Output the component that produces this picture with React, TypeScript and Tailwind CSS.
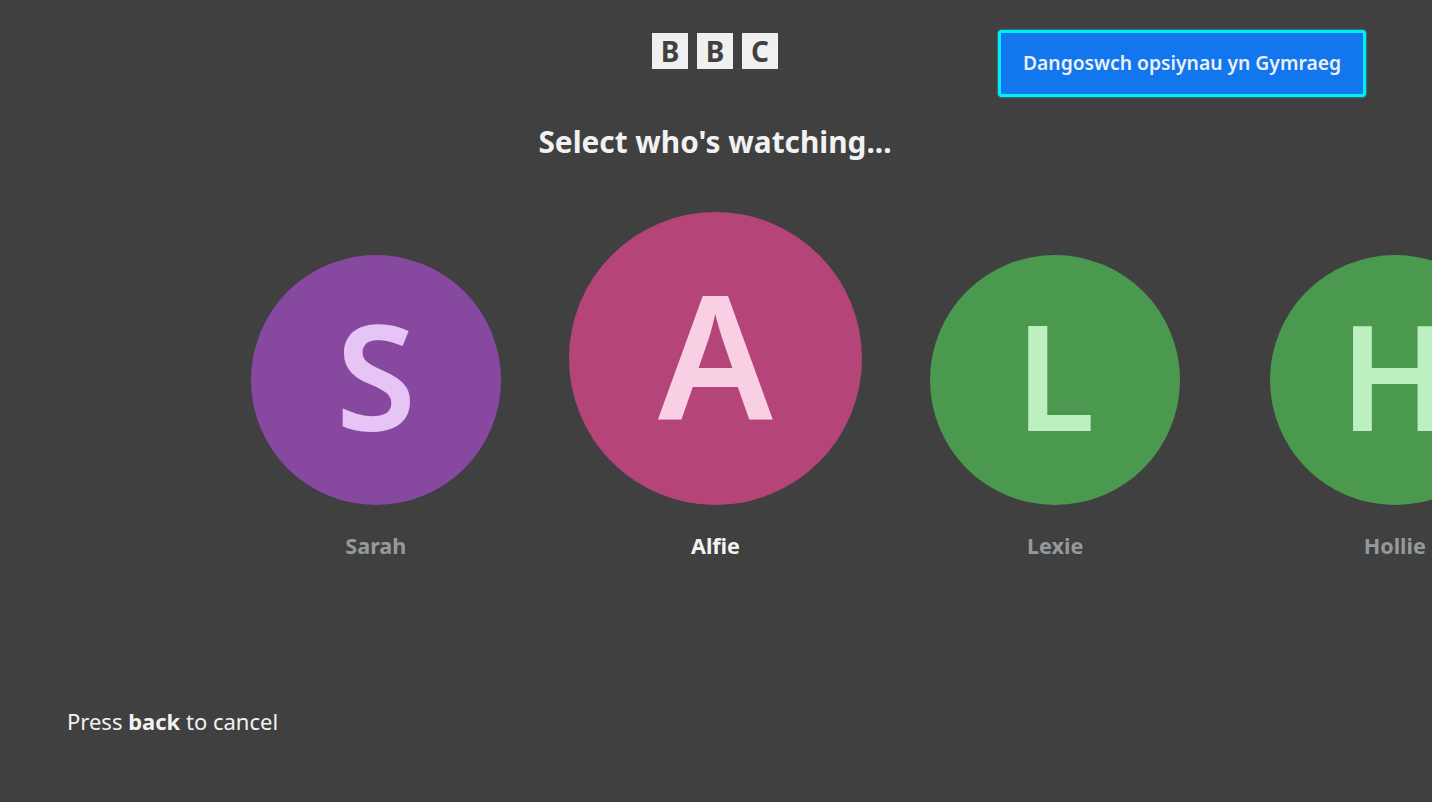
const profiles = [
  { name: 'Sarah', circle: 'bg-[#87489f]', letter: 'text-[#e6c5f6]' },
  { name: 'Alfie', circle: 'bg-[#b54578]', letter: 'text-[#f9d0e3]', active: true },
  { name: 'Lexie', circle: 'bg-[#4a994f]', letter: 'text-[#bdf0c1]' },
  { name: 'Hollie', circle: 'bg-[#4a994f]', letter: 'text-[#bdf0c1]' },
];

export default function App() {
  return (
    <div className="h-[802px] w-[1432px] overflow-hidden bg-[#404040] flex flex-col font-['Noto_Sans',sans-serif] text-[#f2f2f2]">
      {/* Header */}
      <header className="grid grid-cols-3 pt-[30px] pr-[66px] pl-[64px]">
        <div />
        <div className="flex gap-[9px] mt-[3px] self-start justify-self-center">
          {['B', 'B', 'C'].map((l, i) => (
            <div
              key={i}
              className="w-[36px] h-[36px] bg-[#f0f0f0] text-[#404040] flex items-center justify-center text-[28px] leading-none font-bold"
            >
              {l}
            </div>
          ))}
        </div>
        <button className="justify-self-end w-[368px] h-[67px] rounded-[4px] border-[3px] border-[#00eef5] shadow-[0_0_2px_#00eef5] bg-[#1276ee] text-[#ecf0f8] text-[19.3px] font-semibold">
          Dangoswch opsiynau yn Gymraeg
        </button>
      </header>

      <h1 className="mt-[23px] pr-[2px] text-center text-[29.8px] leading-[44px] font-bold">Select who's watching...</h1>

      {/* Profiles */}
      <div className="mt-[48px] ml-[206px] flex">
        {profiles.map((p) => (
          <div key={p.name} className="w-[339.67px] shrink-0 flex flex-col items-center">
            <div className="h-[293px] flex items-end">
              <div
                className={`rounded-full flex items-center justify-center overflow-hidden ${p.circle} ${
                  p.active ? 'w-[293px] h-[293px] pb-[12px]' : 'w-[250px] h-[250px] pb-[10px]'
                }`}
              >
                <span className={`leading-none font-semibold ${p.letter} ${p.active ? 'text-[171px]' : 'text-[146px]'}`}>
                  {p.name[0]}
                </span>
              </div>
            </div>
            <span
              className={`mt-[26px] text-[21.6px] leading-[30px] font-bold ${
                p.active ? 'text-[#f2f2f2]' : 'text-[#94999c]'
              }`}
            >
              {p.name}
            </span>
          </div>
        ))}
      </div>

      <p className="mt-auto mb-[65px] ml-[67px] text-[22px] leading-[32px]">
        Press <b className="font-bold">back</b> to cancel
      </p>
    </div>
  );
}
